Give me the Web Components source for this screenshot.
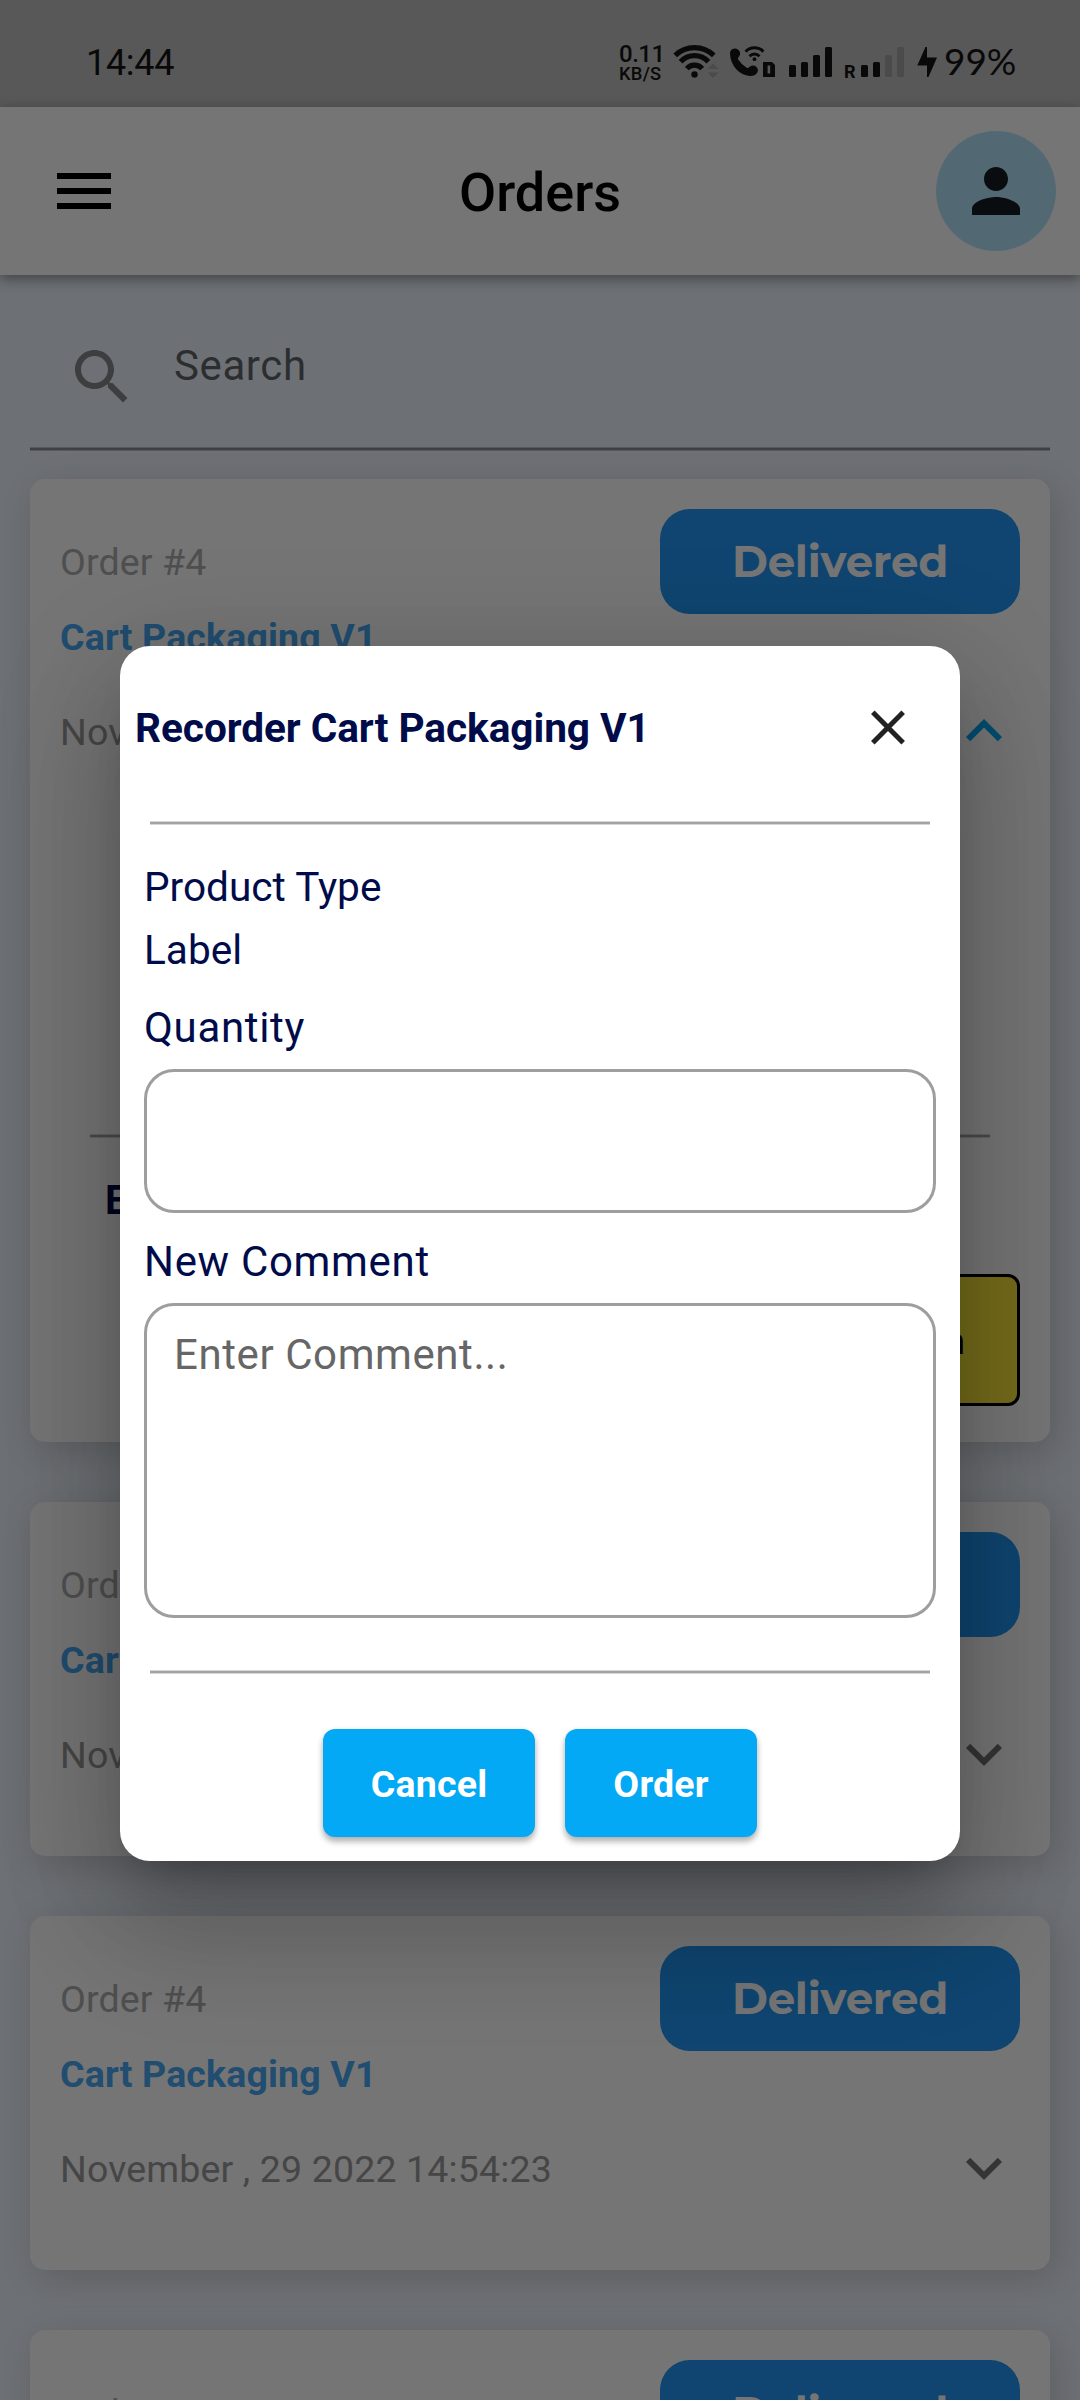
<!DOCTYPE html>
<html lang="en">
<head>
<meta charset="utf-8">
<title>Orders</title>
<style>
html, body { margin: 0; padding: 0; }
body { width: 1080px; height: 2400px; overflow: hidden; font-family: Roboto, "Liberation Sans", sans-serif; }
</style>
</head>
<body>
<orders-screen></orders-screen>

<script>
const define = (name, html) => {
  const template = document.createElement('template');
  template.innerHTML = html;
  customElements.define(name, class extends HTMLElement {
    constructor() {
      super();
      this.attachShadow({ mode: 'open' }).appendChild(template.content.cloneNode(true));
    }
  });
};

define('status-bar', `
<style>
:host { display: flex; align-items: center; box-sizing: border-box; height: 107px; padding: 19px 0 0 86px; background: #bfbfbf; color: #141414; }
.time { flex: 1; font-size: 36px; line-height: 40px; letter-spacing: -.3px; }
.speed { width: 49px; margin-top: 2px; display: flex; flex-direction: column; font-weight: 500; line-height: 19px; white-space: nowrap; }
.speed b { font-weight: 500; font-size: 24px; letter-spacing: -.5px; }
.speed span { font-size: 18.3px; letter-spacing: .3px; }
svg { display: block; width: 276px; height: 88px; }
.level { width: 136px; margin-top: -4px; font: 400 36.9px/40px Lato, sans-serif; }
</style>
<div class="time">14:44</div>
<div class="speed"><b>0.11</b><span>KB/S</span></div>
<svg viewBox="668 19 276 88" fill="#141414">
  <g fill="none" stroke="#141414" stroke-width="5.2">
    <path d="M675.2 55.4A27.8 27.8 0 0 1 713.8 55.4"/>
    <path d="M680.6 61.8A18.8 18.8 0 0 1 708.4 61.8"/>
    <path d="M686.8 68.6A10.2 10.2 0 0 1 702.2 68.6"/>
  </g>
  <circle cx="694.5" cy="74.4" r="3.2"/>
  <path d="M707.5 69l5.5-5.5 5.5 5.5zM707.5 72.5h11l-5.5 5.5z" fill="#a3a3a3"/>
  <path d="M730 53.5a5 5 0 0 1 8.8-3.200a4.600 4.600 0 0 1-.2 6.600q-1.200 1.300-.4 2.600q3.400 5.300 8.500 8.200q1.400.8 2.600-.6a5 5 0 0 1 7.200-.2q2.600 2.800.6 5.900q-2.400 3.600-7.600 3.200q-7.500-1-13-6.600q-6.200-6.600-6.500-15.900z"/>
  <g fill="none" stroke="#141414" stroke-width="3">
    <path d="M745.600 51.600A12.400 12.400 0 0 1 763.400 51.600"/>
    <path d="M749.500 56.200A7 7 0 0 1 759.500 56.200"/>
  </g>
  <circle cx="754.500" cy="59.200" r="1.900"/>
  <path fill-rule="evenodd" d="M763 62h9l3 3v12h-12zM767.600 65.500v8h2.600v-8z"/>
  <g>
    <rect x="789" y="65" width="7" height="12" rx="1.500"/><rect x="801" y="62" width="7" height="15" rx="1.500"/>
    <rect x="813" y="55" width="7" height="22" rx="1.500"/><rect x="825" y="47" width="7" height="30" rx="1.500"/>
    <rect x="861" y="65" width="7" height="12" rx="1.500"/><rect x="873" y="62" width="7" height="15" rx="1.500"/>
  </g>
  <g fill="#a3a3a3">
    <rect x="885" y="55" width="7" height="22" rx="1.500"/><rect x="897" y="47" width="7" height="30" rx="1.500"/>
  </g>
  <text x="844" y="78" font-family="Roboto" font-weight="700" font-size="18">R</text>
  <path d="M925.500 47h1.500v10.500h10L928.500 77h-1.500V65.500h-9.700z"/>
</svg>
<div class="level">99%</div>
`);

define('app-bar', `
<style>
:host { display: flex; align-items: center; box-sizing: border-box; height: 168px; padding: 0 24px; background: #fff; position: relative; box-shadow: 0 4px 12px rgba(0,0,0,.4); }
.side { flex: 1; display: flex; }
.side.end { justify-content: flex-end; }
.burger { width: 72px; height: 72px; display: block; margin-left: 24px; }
h1 { margin: 0; padding-top: 4px; font-size: 54px; font-weight: 500; line-height: 64px; color: #000; }
.avatar { width: 120px; height: 120px; border-radius: 50%; background: #b3e5fc; display: flex; align-items: center; justify-content: center; }
.avatar svg { width: 72px; height: 72px; }
</style>
<div class="side"><svg class="burger" viewBox="0 0 24 24"><path d="M3 18h18v-2H3zM3 13h18v-2H3zM3 6v2h18V6z"/></svg></div>
<h1><slot></slot></h1>
<div class="side end"><div class="avatar"><svg viewBox="0 0 24 24" fill="#171e21"><path d="M12 12c2.210 0 4-1.790 4-4s-1.790-4-4-4-4 1.790-4 4 1.790 4 4 4zm0 2c-2.670 0-8 1.340-8 4v2h16v-2c0-2.660-5.330-4-8-4z"/></svg></div></div>
`);

define('search-field', `
<style>
:host { display: flex; flex-direction: column; height: 176px; }
.row { flex: 1; display: flex; gap: 36px; padding-left: 36px; align-items: flex-start; }
svg { width: 72px; height: 72px; margin-top: 66px; }
span { margin-top: 61px; font-size: 42px; line-height: 60px; letter-spacing: .6px; color: rgba(0,0,0,.6); }
i { height: 4px; background: linear-gradient(rgba(0,0,0,.2) 25%, rgba(0,0,0,.42) 25% 75%, rgba(0,0,0,.2) 75%); }
</style>
<div class="row">
  <svg viewBox="0 0 24 24" fill="rgba(0,0,0,.44)"><path d="M15.500 14h-.79l-.28-.27C15.410 12.590 16 11.110 16 9.500 16 5.910 13.090 3 9.500 3S3 5.910 3 9.500 5.910 16 9.500 16c1.610 0 3.090-.59 4.230-1.570l.27.28v.79l5 4.990L20.490 19l-4.990-5zm-6 0C7.010 14 5 11.990 5 9.500S7.010 5 9.500 5 14 7.010 14 9.500 11.990 14 9.500 14z"/></svg>
  <span><slot></slot></span>
</div>
<i></i>
`);

define('status-badge', `
<style>
:host { display: flex; align-items: center; justify-content: center; width: 360px; height: 105px; border-radius: 30px; background: #2196f3; color: #fff; font: 700 43.5px/54px Montserrat, sans-serif; letter-spacing: -.25px; }
</style><slot></slot>
`);

define('hair-line', `
<style>
:host { display: block; height: 4px; background: linear-gradient(rgba(0,0,0,.16) 25%, rgba(0,0,0,.36) 25% 75%, rgba(0,0,0,.16) 75%); }
</style>
`);

define('order-card', `
<style>
:host { display: block; background: #fff; border-radius: 15px; box-shadow: 6px 9px 36px rgba(0,0,0,.15); font-size: 37.5px; letter-spacing: .15px; }
.top { display: flex; justify-content: space-between; align-items: center; height: 105px; padding: 30px 30px 0; color: #acacac; }
.title { padding: 0 30px; height: 46px; line-height: 46px; color: #46a8f4; font-weight: 700; }
.when { display: flex; justify-content: space-between; align-items: center; height: 72px; margin-top: 35px; padding: 0 30px; color: #9a9a9a; }
.when span { padding-top: 1px; }
.arrow { width: 72px; height: 72px; }
.down { fill: #757575; }
.up { display: none; fill: #03a9f4; }
:host([open]) .down { display: none; }
:host([open]) .up { display: block; }
.rest { min-height: 66px; }
</style>
<div class="top"><span><slot name="number"></slot></span><status-badge>Delivered</status-badge></div>
<div class="title"><slot name="title"></slot></div>
<div class="when"><span><slot name="date"></slot></span>
  <svg class="arrow down" viewBox="0 0 24 24"><path d="M16.590 8.590L12 13.170 7.410 8.590 6 10l6 6 6-6z"/></svg>
  <svg class="arrow up" viewBox="0 0 24 24"><path d="M12 8l-6 6 1.410 1.410L12 10.830l4.590 4.580L18 14z"/></svg>
</div>
<div class="rest"><slot></slot></div>
`);

define('order-details', `
<style>
:host { display: flex; flex-direction: column; padding: 367px 30px 36px; }
hair-line { margin: 0 30px; }
.head { margin: 40px 0 0 45px; font-size: 40px; line-height: 46px; font-weight: 700; color: #000b49; }
.action { align-self: flex-end; display: flex; align-items: center; justify-content: flex-end; box-sizing: border-box; width: 300px; height: 132px; margin-top: 50px; padding: 2px 52px 0 0; border: 3px solid #000; border-radius: 12px; background: #ffeb3b; font-size: 37.5px; font-weight: 500; color: #000; }
</style>
<hair-line></hair-line>
<div class="head">E</div>
<div class="action">n</div>
`);

define('outlined-box', `
<style>
:host { display: block; box-sizing: border-box; border: 3px solid #9e9e9e; border-radius: 30px; padding: 19px 27px; line-height: 60px; color: #666; letter-spacing: .58px; }
</style><slot></slot>
`);

define('raised-button', `
<style>
:host { display: flex; align-items: center; justify-content: center; height: 108px; border-radius: 12px; background: #03a9f4; color: #fff; font-size: 37.5px; font-weight: 700; letter-spacing: .2px; box-shadow: 0 5px 6px rgba(0,0,0,.24), 0 2px 6px rgba(0,0,0,.12); }
span { padding-top: 2px; }
</style><span><slot></slot></span>
`);

define('reorder-dialog', `
<style>
:host { display: flex; flex-direction: column; box-sizing: border-box; width: 840px; height: 1215px; border-radius: 30px; background: #fff; color: #000b49; font-size: 42px; letter-spacing: .68px; box-shadow: 0 33px 45px -21px rgba(0,0,0,.2), 0 72px 114px 9px rgba(0,0,0,.14), 0 27px 120px 16px rgba(0,0,0,.14); }
header { display: flex; align-items: center; justify-content: space-between; height: 163px; padding: 0 48px 0 15px; margin-bottom: 12px; }
h2 { margin: 0; font-size: 40.6px; font-weight: 700; line-height: 48px; letter-spacing: -.05px; }
header svg { width: 48px; height: 48px; display: block; }
hair-line { margin: 0 30px; }
.body { display: flex; flex-direction: column; padding: 31px 24px 52px; }
.small { font-size: 40.6px; line-height: 63px; letter-spacing: 0; }
.label { line-height: 60px; margin: 16px 0 11px; }
.label.next { margin-top: 19px; }
.qty { height: 144px; }
.note { height: 315px; }
footer { display: flex; justify-content: center; gap: 30px; margin-top: 55px; }
.cancel { width: 212px; }
.order { width: 192px; }
</style>
<header><h2>Recorder Cart Packaging V1</h2>
<svg viewBox="0 0 48 48" stroke="#222" stroke-width="5"><path d="M8.800 8.300l30.400 30.400M39.200 8.300L8.800 38.700"/></svg></header>
<hair-line></hair-line>
<div class="body">
  <div class="small">Product Type</div>
  <div class="small">Label</div>
  <div class="label">Quantity</div>
  <outlined-box class="qty"></outlined-box>
  <div class="label next">New Comment</div>
  <outlined-box class="note">Enter Comment...</outlined-box>
</div>
<hair-line></hair-line>
<footer><raised-button class="cancel">Cancel</raised-button><raised-button class="order">Order</raised-button></footer>
`);

define('orders-screen', `
<style>
:host { display: block; position: relative; width: 1080px; height: 2400px; overflow: hidden; background: #edf3fc; }
main { display: flex; flex-direction: column; padding: 0 30px; }
.list { display: flex; flex-direction: column; gap: 60px; padding-top: 28px; }
.scrim { position: absolute; inset: 0; display: flex; justify-content: center; align-items: flex-start; padding-top: 646px; background: rgba(0,0,0,.54); }
</style>
<status-bar></status-bar>
<app-bar>Orders</app-bar>
<main>
  <search-field>Search</search-field>
  <div class="list">
    <order-card open><span slot="number">Order #4</span><span slot="title">Cart Packaging V1</span><span slot="date">Nov</span><order-details></order-details></order-card>
    <order-card><span slot="number">Order #4</span><span slot="title">Cart Packaging V1</span><span slot="date">Nov</span></order-card>
    <order-card><span slot="number">Order #4</span><span slot="title">Cart Packaging V1</span><span slot="date">November , 29 2022 14:54:23</span></order-card>
    <order-card><span slot="number">Order #4</span></order-card>
  </div>
</main>
<div class="scrim"><reorder-dialog></reorder-dialog></div>
`);
</script>
</body>
</html>
